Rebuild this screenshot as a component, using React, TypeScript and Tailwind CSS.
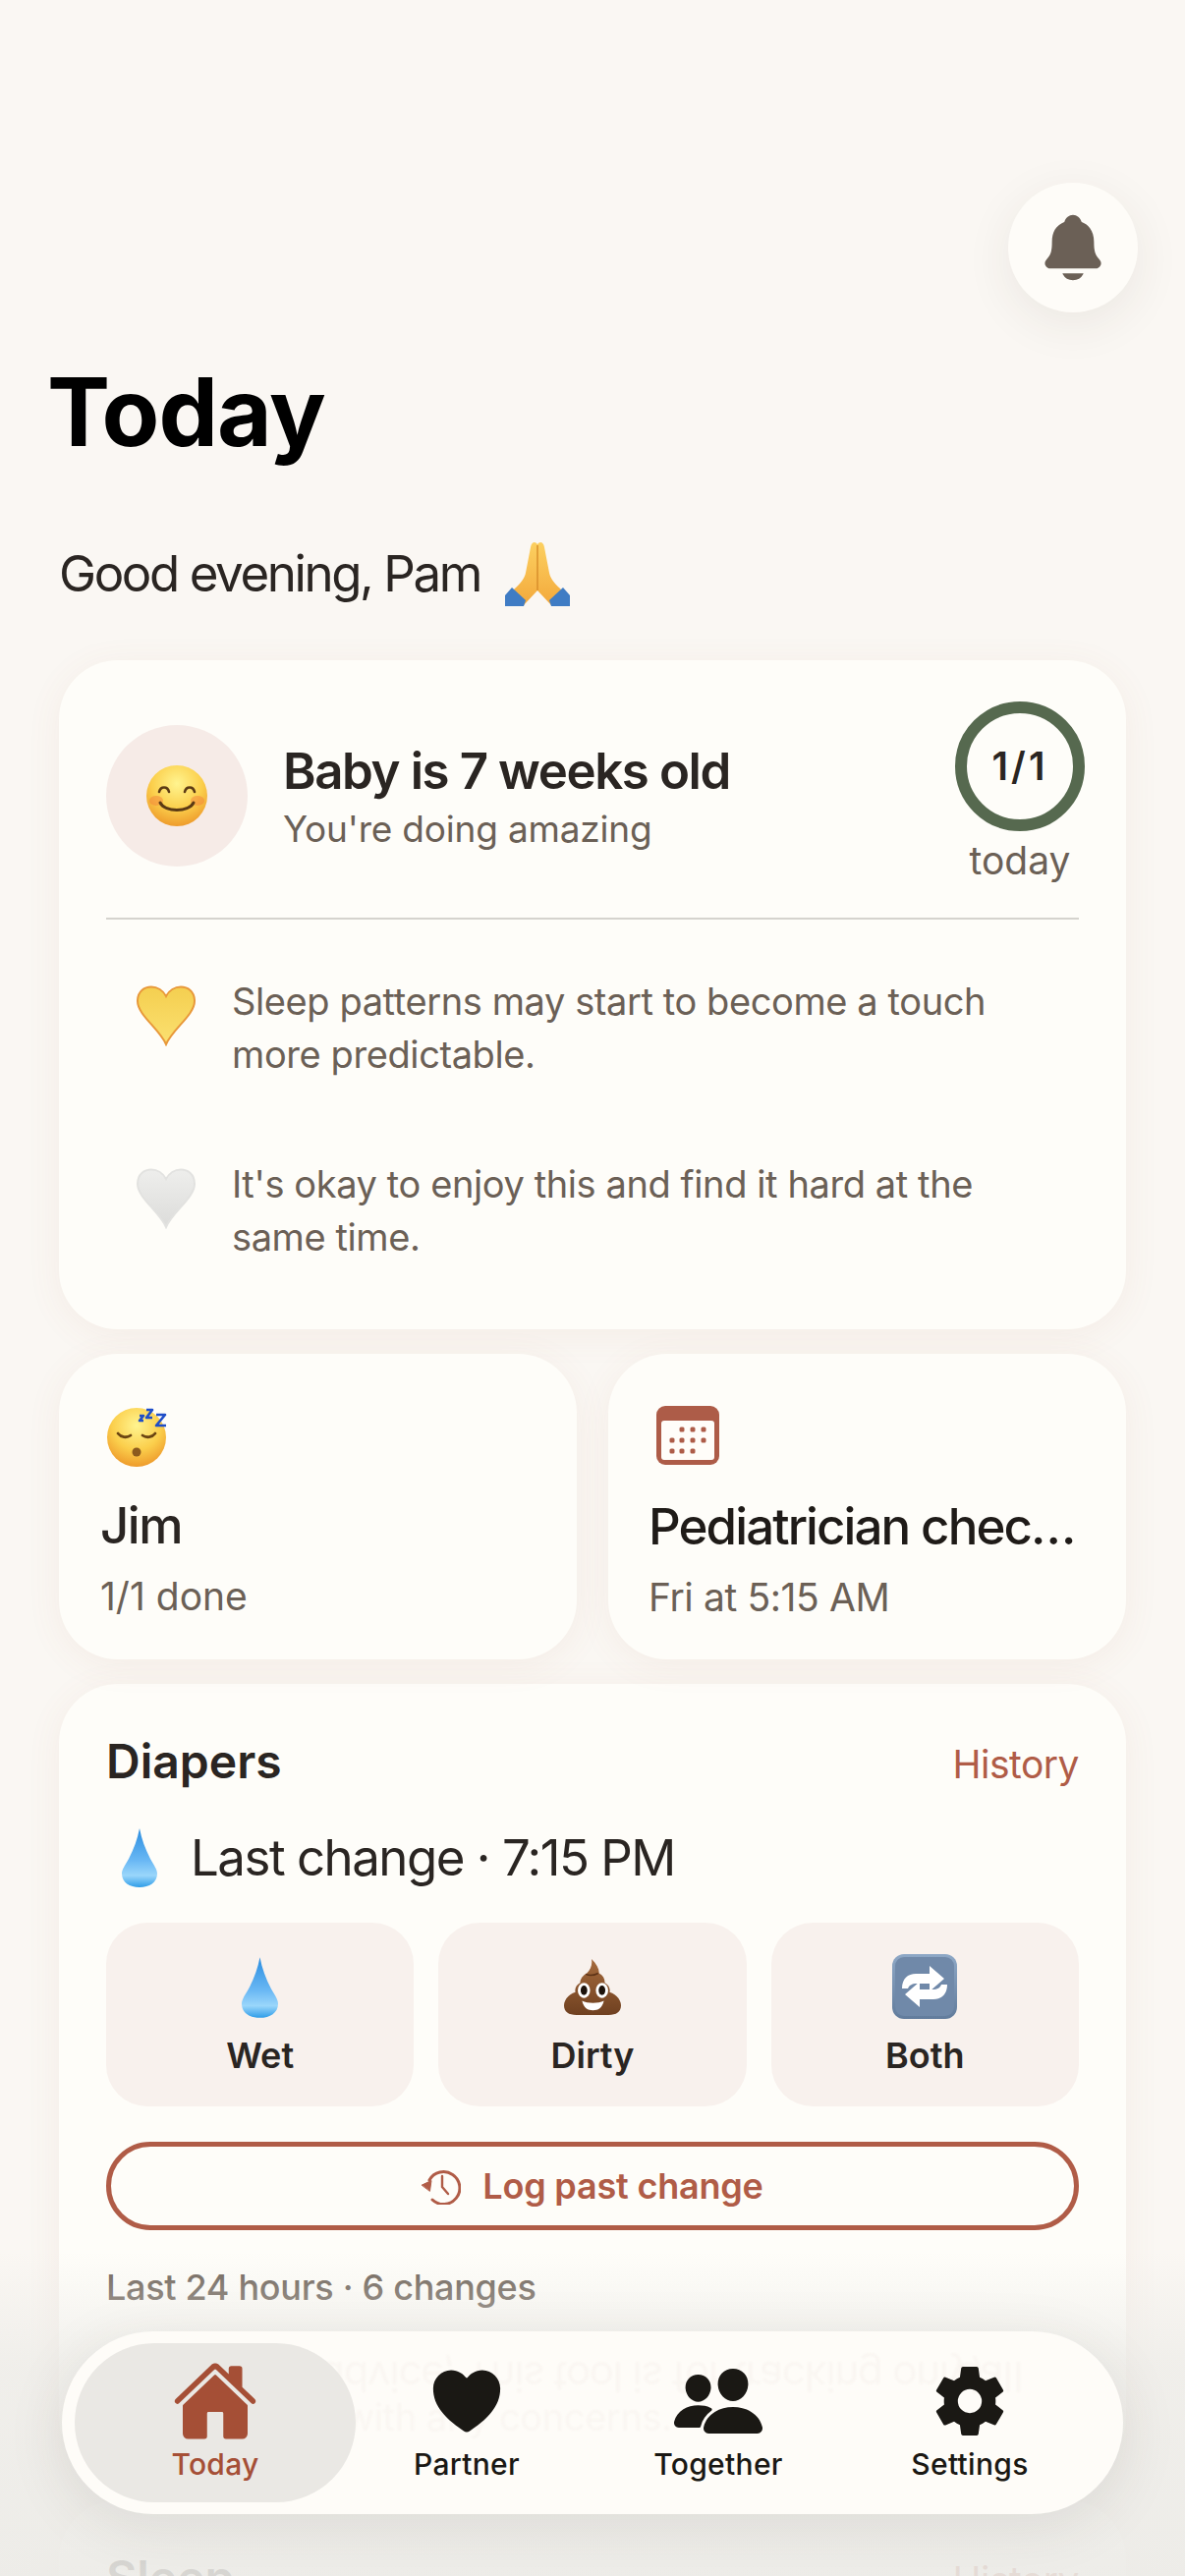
import React from "react";
import { IoHome, IoHeart, IoPeople, IoSettingsSharp, IoNotifications } from "react-icons/io5";

// Apple style emoji are not installed, so each one is a small svg
const FaceDefs = () => (
  <defs>
    <radialGradient id="face" cx="50%" cy="30%" r="75%">
      <stop offset="0%" stopColor="#fff48f" />
      <stop offset="55%" stopColor="#fbcf4c" />
      <stop offset="100%" stopColor="#ec9226" />
    </radialGradient>
  </defs>
);

const SmileEmoji = () => (
  <svg viewBox="0 0 64 64" className="w-[64px] h-[64px]">
    <FaceDefs />
    <circle cx="32" cy="32" r="31" fill="url(#face)" />
    <ellipse cx="11" cy="37" rx="7" ry="5" fill="#f2793a" opacity="0.45" />
    <ellipse cx="53" cy="37" rx="7" ry="5" fill="#f2793a" opacity="0.45" />
    <path d="M14 28c1.500-6 8.500-6 10 0M40 28c1.500-6 8.500-6 10 0" fill="none" stroke="#5b3a14" strokeWidth="2.600" strokeLinecap="round" />
    <path d="M15 39c5 10 29 10 34 0" fill="none" stroke="#5b3a14" strokeWidth="3" strokeLinecap="round" />
  </svg>
);

const SleepEmoji = () => (
  <svg viewBox="0 0 64 64" className="w-[66px] h-[64px]">
    <FaceDefs />
    <circle cx="30" cy="33" r="30" fill="url(#face)" />
    <path d="M11 29c3 4 9 5 13 2M36 31c4 3 10 2 13-2" fill="none" stroke="#6b4512" strokeWidth="2.800" strokeLinecap="round" />
    <ellipse cx="30" cy="48" rx="4.500" ry="4.500" fill="#8c5a1e" />
    <path d="M33 11h4l-4 5h4M40 5h6l-6 8h6M50 10h9l-9 11h10" fill="none" stroke="#1f4ec8" strokeWidth="2.600" strokeLinejoin="round" />
  </svg>
);

const PrayEmoji = () => (
  <svg viewBox="0 0 66 66" className="w-[66px] h-[66px]">
    <defs>
      <linearGradient id="hand" x1="0" y1="0" x2="0" y2="1">
        <stop offset="0%" stopColor="#fcd060" />
        <stop offset="100%" stopColor="#f3a93c" />
      </linearGradient>
    </defs>
    <path d="M33 3c-2-3-6-3-7 3l-5 26c-1 5-5 11-11 16l-5 5 14 12 14-15z" fill="url(#hand)" />
    <path d="M33 3c2-3 6-3 7 3l5 26c1 5 5 11 11 16l5 5-14 12-14-15z" fill="url(#hand)" />
    <path d="M33 4v46" stroke="#d98f2b" strokeWidth="1.500" />
    <path d="M0 55l7-8 14 13-2 6H0z" fill="#3f7cc4" />
    <path d="M66 55l-7-8-14 13 2 6h19z" fill="#3f7cc4" />
  </svg>
);

const Heart = ({ id, light, mid, edge }: { id: string; light: string; mid: string; edge: string }) => (
  <svg viewBox="0 0 62 62" className="w-[62px] h-[62px]">
    <defs>
      <linearGradient id={id} x1="0" y1="0" x2="0" y2="1">
        <stop offset="0%" stopColor={light} />
        <stop offset="100%" stopColor={mid} />
      </linearGradient>
    </defs>
    <path
      d="M31 60C24 44 2 30 2 16 2 6 9 1.500 16 1.500c6 0 12 3.500 15 9.500 3-6 9-9.500 15-9.500 7 0 14 4.500 14 14.500 0 14-22 28-29 44z"
      fill={`url(#${id})`}
      stroke={edge}
      strokeWidth="2"
    />
  </svg>
);

const Drop = ({ className }: { className: string }) => (
  <svg viewBox="0 0 36 60" className={className}>
    <defs>
      <linearGradient id="drop" x1="0" y1="0" x2="0" y2="1">
        <stop offset="0%" stopColor="#2a8de0" />
        <stop offset="55%" stopColor="#6ab8f4" />
        <stop offset="80%" stopColor="#9ad6fb" />
        <stop offset="100%" stopColor="#2f9de8" />
      </linearGradient>
    </defs>
    <path d="M18 0c2 11 6 21 11 31 4 7 7 11 7 15 0 9-8 14-18 14S0 55 0 46c0-4 3-8 7-15C12 21 16 11 18 0z" fill="url(#drop)" />
  </svg>
);

const PoopEmoji = () => (
  <svg viewBox="0 0 60 60" className="w-[58px] h-[58px]">
    <defs>
      <linearGradient id="poop" x1="0" y1="0" x2="0" y2="1">
        <stop offset="0%" stopColor="#a56a3c" />
        <stop offset="100%" stopColor="#6f4020" />
      </linearGradient>
    </defs>
    <path d="M29 0c5 5 8 10 8 15 4 2 6 6 6 10 4 2 6 6 5 10 7 2 12 8 12 14 0 7-5 10-13 10H13C5 59 0 56 0 49c0-6 5-12 12-14-1-4 1-8 5-10 0-4 3-8 7-10 4-4 6-9 5-15z" fill="url(#poop)" />
    <path d="M23 16c4 2 9 1 13-1" fill="none" stroke="#5c3216" strokeWidth="1.500" />
    <ellipse cx="21" cy="33" rx="6.500" ry="8" fill="#fff" />
    <ellipse cx="40" cy="33" rx="6.500" ry="8" fill="#fff" />
    <ellipse cx="21" cy="33" rx="3.500" ry="5" fill="#1c120b" />
    <ellipse cx="40" cy="33" rx="3.500" ry="5" fill="#1c120b" />
    <path d="M19 44c6 3 17 3 23 0-2 8-6 10-11.500 10S21 52 19 44z" fill="#fff" />
  </svg>
);

const RepeatEmoji = () => (
  <svg viewBox="0 0 66 66" className="w-[66px] h-[66px]">
    <defs>
      <linearGradient id="square" x1="0" y1="0" x2="0" y2="1">
        <stop offset="0%" stopColor="#8ea8c6" />
        <stop offset="100%" stopColor="#627c9c" />
      </linearGradient>
    </defs>
    <rect width="66" height="66" rx="12" fill="url(#square)" />
    <rect x="3" y="3" width="60" height="60" rx="9" fill="#7089a9" />
    <path d="M10 35c0-10 6-15 14-15h14v-8l15 13-15 13v-8H25c-5 0-8 2-9 5z" fill="#fff" />
    <path d="M56 31c0 10-6 15-14 15H28v8L13 41l15-13v8h13c5 0 8-2 9-5z" fill="#fff" />
  </svg>
);

const CalendarIcon = () => (
  <svg viewBox="0 0 64 60" className="w-[64px] h-[60px]">
    <rect width="64" height="60" rx="9" fill="#ad5c48" />
    <rect x="5" y="15" width="54" height="40" rx="3" fill="#fffdf9" />
    {[[26, 24], [37, 24], [48, 24], [16, 35], [26, 35], [37, 35], [48, 35], [16, 46], [26, 46], [37, 46]].map(([x, y]) => (
      <rect key={`${x}-${y}`} x={x - 2.500} y={y - 2.500} width="5" height="5" rx="1.500" fill="#ad5c48" />
    ))}
  </svg>
);

const HistoryIcon = () => (
  <svg viewBox="0 0 40 37" className="h-[37px] w-[40px]" fill="none" stroke="currentColor" strokeWidth="3" strokeLinecap="round" strokeLinejoin="round">
    <path d="M8 12A16.500 16.500 0 1 1 11 32" />
    <path d="M0.500 17L10 12.500 8.500 23z" fill="currentColor" strokeWidth="1" />
    <path d="M21 8v11l6 7" strokeWidth="2.400" />
  </svg>
);

const bullets = [
  { id: "heart-yellow", text: "Sleep patterns may start to become a touch more predictable.", light: "#f4cf50", mid: "#fbe070", edge: "#e8983a" },
  { id: "heart-white", text: "It's okay to enjoy this and find it hard at the same time.", light: "#eeeeec", mid: "#dcdcda", edge: "#e2e2e0" },
];

const tabs = [
  { label: "Today", Icon: IoHome, size: "h-[88px] w-[88px]", active: true },
  { label: "Partner", Icon: IoHeart, size: "h-[84px] w-[84px]", active: false },
  { label: "Together", Icon: IoPeople, size: "h-[96px] w-[96px]", active: false },
  { label: "Settings", Icon: IoSettingsSharp, size: "h-[78px] w-[78px]", active: false },
];

const cardClass = "rounded-[60px] bg-[#fefdf9] shadow-[0_6px_36px_rgba(170,100,70,0.07)]";

export default function App() {
  return (
    <div className="relative h-[2622px] w-[1206px] overflow-hidden bg-[#faf7f3] font-['Inter',sans-serif] text-[#2a2522]">
      <div className="flex justify-end pt-[186px] pr-[48px]">
        <button className="flex h-[132px] w-[132px] items-center justify-center rounded-full bg-[#fefcf8] shadow-[0_12px_48px_rgba(60,50,40,0.08)]">
          <IoNotifications className="h-[76px] w-[76px] text-[#6b6056]" />
        </button>
      </div>

      <h1 className="mt-[43px] pl-[48px] text-[96px] leading-[116px] font-bold tracking-[-1px] text-black">Today</h1>

      <div className="mt-[71px] flex items-center gap-[25px] pl-[60px] text-[51px] leading-[72px] tracking-[-2.400px]">
        <span>Good evening, Pam</span>
        <PrayEmoji />
      </div>

      <div className={`mx-[60px] mt-[52px] px-[48px] pt-[42px] pb-[67px] ${cardClass}`}>
        <div className="flex items-start">
          <div className="mt-[24px] flex h-[144px] w-[144px] items-center justify-center rounded-full bg-[#f6ebe7]">
            <SmileEmoji />
          </div>
          <div className="ml-[36px] mt-[38px] flex-1">
            <div className="text-[51px] leading-[66px] font-semibold tracking-[-1.400px]">Baby is 7 weeks old</div>
            <div className="mt-[2px] text-[37px] leading-[48px] tracking-[-0.200px] text-[#6b6056]">You're doing amazing</div>
          </div>
          <div className="mr-[-6px] flex flex-col items-center">
            <div className="flex h-[132px] w-[132px] items-center justify-center rounded-full border-[12px] border-[#56694f] text-[39px] font-semibold tracking-[3px]">1/1</div>
            <div className="mt-[6px] text-[39px] leading-[48px] text-[#6b6056]">today</div>
          </div>
        </div>
        <div className="mt-[34px] h-[2px] bg-[#d5d3ce]" />
        {bullets.map((b, i) => (
          <div key={b.text} className={`flex items-start gap-[36px] pl-[30px] ${i === 0 ? "mt-[48px]" : "mt-[70px]"}`}>
            <div className="mt-[19px] shrink-0">
              <Heart id={b.id} light={b.light} mid={b.mid} edge={b.edge} />
            </div>
            <p className="mt-[8px] w-[800px] text-[38px] leading-[54px] tracking-[-0.400px] text-[#6b6056]">{b.text}</p>
          </div>
        ))}
      </div>

      <div className="mx-[60px] mt-[25px] grid grid-cols-2 gap-[32px]">
        <div className={`h-[311px] pt-[52px] pl-[42px] ${cardClass}`}>
          <div className="pl-[6px]"><SleepEmoji /></div>
          <div className="mt-[26px] text-[51px] leading-[66px] font-medium tracking-[-1.500px]">Jim</div>
          <div className="mt-[15px] text-[39px] leading-[48px] text-[#6b6056]">1/1 done</div>
        </div>
        <div className={`h-[311px] pt-[53px] pl-[41px] ${cardClass}`}>
          <div className="pl-[8px]"><CalendarIcon /></div>
          <div className="mt-[30px] w-[452px] truncate text-[51px] leading-[66px] font-medium tracking-[-1.900px] text-[#1f1b18]">Pediatrician check-up</div>
          <div className="mt-[15px] text-[39px] leading-[48px] tracking-[-0.400px] text-[#6b6056]">Fri at 5:15 AM</div>
        </div>
      </div>

      <div className={`mx-[60px] mt-[25px] h-[806px] px-[48px] pt-[46px] ${cardClass}`}>
        <div className="flex items-baseline justify-between">
          <h2 className="text-[48px] leading-[66px] font-semibold">Diapers</h2>
          <button className="mt-[2px] text-[39px] tracking-[-0.500px] text-[#b05c47]">History</button>
        </div>
        <div className="mt-[32px] flex items-center gap-[34px] pl-[16px]">
          <Drop className="h-[60px] w-[36px]" />
          <span className="text-[51px] leading-[66px] tracking-[-1.500px]">Last change · 7:15 PM</span>
        </div>
        <div className="mt-[33px] grid grid-cols-3 gap-[25px]">
          <div className="flex h-[187px] flex-col items-center rounded-[42px] bg-[#f8f1ed] pt-[35px]">
            <div className="flex h-[62px] items-center"><Drop className="h-[62px] w-[37px]" /></div>
            <div className="mt-[14px] text-[36px] leading-[48px] font-semibold">Wet</div>
          </div>
          <div className="flex h-[187px] flex-col items-center rounded-[42px] bg-[#f8f1ed] pt-[35px]">
            <div className="flex h-[62px] items-center"><PoopEmoji /></div>
            <div className="mt-[14px] text-[36px] leading-[48px] font-semibold">Dirty</div>
          </div>
          <div className="flex h-[187px] flex-col items-center rounded-[42px] bg-[#f8f1ed] pt-[32px]">
            <div className="flex h-[66px] items-center"><RepeatEmoji /></div>
            <div className="mt-[13px] text-[36px] leading-[48px] font-semibold">Both</div>
          </div>
        </div>
        <button className="mt-[36px] flex h-[90px] w-full items-center justify-center gap-[22px] rounded-full border-[5px] border-[#b05c47] text-[36px] font-semibold tracking-[-0.200px] text-[#b05c47]">
          <HistoryIcon />
          Log past change
        </button>
        <div className="mt-[34px] text-[36px] leading-[48px] font-medium tracking-[-0.300px] text-[#6b6056]">Last 24 hours · 6 changes</div>
      </div>

      <div className={`mx-[60px] mt-[25px] h-[200px] px-[48px] pt-[46px] ${cardClass}`}>
        <div className="flex items-baseline justify-between">
          <h2 className="text-[48px] leading-[66px] font-semibold">Sleep</h2>
          <button className="text-[39px] tracking-[-0.500px] text-[#b05c47]">History</button>
        </div>
      </div>

      {/* fade under the floating tab bar */}
      <div className="pointer-events-none absolute inset-x-0 bottom-0 h-[330px] bg-gradient-to-b from-[#ecebe7]/0 via-[#ecebe7]/70 via-35% to-[#ecebe7]/90" />

      <nav className="absolute top-[2373px] left-[63px] h-[186px] w-[1080px] overflow-hidden rounded-full bg-[#fefcf8] shadow-[0_12px_60px_rgba(60,50,40,0.10)]">
        <div aria-hidden className="absolute top-[22px] left-[264px] -scale-y-100 whitespace-nowrap text-[42px] leading-[48px] tracking-[-1.200px] text-[#8a5a4a] opacity-[0.03] blur-[1px]">
          advice; This tool is for tracking only)
        </div>
        <div aria-hidden className="absolute top-[22px] left-[910px] -scale-y-100 whitespace-nowrap text-[42px] leading-[48px] text-[#8a5a4a] opacity-[0.03] blur-[1px]">
          call
        </div>
        <div aria-hidden className="absolute top-[60px] left-[287px] whitespace-nowrap text-[38px] leading-[54px] tracking-[-0.360px] text-[#8a5a4a] opacity-[0.03] blur-[1px]">
          with any concerns.
        </div>
        <div className="relative grid h-full grid-cols-4 px-[28px]">
          {tabs.map(({ label, Icon, size, active }) => (
            <div key={label} className="relative flex flex-col items-center pt-[29px]">
              {active && <div className="absolute -inset-x-[15px] top-[12px] h-[162px] rounded-full bg-[#eae8e4]" />}
              <div className="relative flex h-[84px] w-[96px] items-center justify-center">
                <Icon className={`shrink-0 ${size} ${active ? "text-[#a54f36]" : "text-[#1a1814]"}`} />
              </div>
              <span className={`relative mt-[2px] text-[30px] leading-[40px] font-medium tracking-[0.300px] ${active ? "text-[#a54f36]" : "text-[#1a1814]"}`}>{label}</span>
            </div>
          ))}
        </div>
      </nav>
    </div>
  );
}
